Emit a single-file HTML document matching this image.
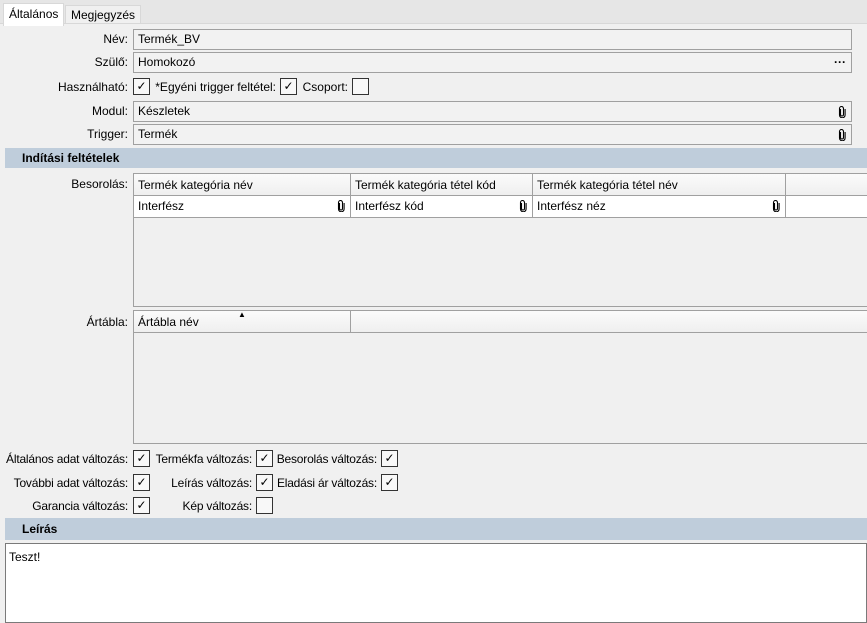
<!DOCTYPE html>
<html><head><meta charset="utf-8"><style>
*{box-sizing:border-box;margin:0;padding:0}
body{width:867px;height:618px;overflow:hidden;background:#f0f0f0;font-family:"Liberation Sans",sans-serif;font-size:12px;color:#000;position:relative}
.a{position:absolute;white-space:nowrap}
.top{left:0;top:0;width:867px;height:24px;background:#e6e6e6;border-bottom:1px solid #d8d8d8}
.tab{top:3px;height:22px;line-height:20px;padding:0 5px}
.lbl{text-align:right;width:128px;left:0}
.r{text-align:right}
.inp{left:133px;width:719px;height:21px;background:#f2f2f2;border:1px solid #a0a0a0;line-height:19px;padding-left:4px}
.cb{width:17px;height:17px;border:1px solid #333;background:#f8f8f8;text-align:center;line-height:15px;font-size:12px}
.sec{left:5px;width:862px;height:20px;background:#bfcddb;font-weight:bold;line-height:20px;padding-left:17px}
.grid{left:133px;width:740px;background:#f0f0f0;border:1px solid #a0a0a0}
.hc{position:absolute;top:0;height:22px;line-height:22px;padding-left:4px;border-right:1px solid #a0a0a0;background:linear-gradient(#fbfbfb,#efefef);border-bottom:1px solid #a0a0a0}
.dc{position:absolute;top:22px;height:22px;line-height:21px;padding-left:4px;border-right:1px solid #a0a0a0;background:#fff;border-bottom:1px solid #a0a0a0}
.clip{position:absolute;right:5px;top:4px;width:8px;height:12px}
</style></head><body>
<svg width="0" height="0" style="position:absolute"><defs><symbol id="pc" viewBox="0 0 8 12"><path d="M2.5 3v5.5a1.5 1.5 0 0 0 3 0V2.5a2 2 0 0 0-4 0v6.5a2.8 2.8 0 0 0 5.6 0V3" fill="none" stroke="#000" stroke-width="1.1"/></symbol></defs></svg>
<div class="a top"></div>
<div class="a" style="left:5px;top:24px;width:862px;height:594px;background:#f0f0f0"></div>
<div class="a tab" style="left:3px;background:#fff;border:1px solid #d8d8d8;border-bottom:none;height:23px">Általános</div>
<div class="a tab" style="left:65px;background:#f0f0f0;border:1px solid #d8d8d8;top:5px;height:19px;line-height:18px">Megjegyzés</div>

<div class="a lbl" style="top:32px">Név:</div><div class="a inp" style="top:29px">Termék_BV</div>
<div class="a lbl" style="top:55px">Szülő:</div><div class="a inp" style="top:52px">Homokozó<span style="position:absolute;right:5px;font-weight:bold">···</span></div>
<div class="a lbl" style="top:80px">Használható:</div><div class="a cb" style="left:133px;top:78px">✓</div>
<div class="a r" style="left:150px;width:126px;top:80px">*Egyéni trigger feltétel:</div><div class="a cb" style="left:280px;top:78px">✓</div>
<div class="a r" style="left:298px;width:50px;top:80px">Csoport:</div><div class="a cb" style="left:352px;top:78px"></div>
<div class="a lbl" style="top:104px">Modul:</div><div class="a inp" style="top:101px">Készletek<svg class="clip"><use href="#pc"/></svg></div>
<div class="a lbl" style="top:127px">Trigger:</div><div class="a inp" style="top:124px">Termék<svg class="clip"><use href="#pc"/></svg></div>
<div class="a sec" style="top:148px">Indítási feltételek</div>

<div class="a lbl" style="top:177px">Besorolás:</div>
<div class="a grid" style="top:173px;height:134px">
<div class="hc" style="left:0;width:217px">Termék kategória név</div>
<div class="hc" style="left:217px;width:182px">Termék kategória tétel kód</div>
<div class="hc" style="left:399px;width:253px">Termék kategória tétel név</div>
<div class="hc" style="left:652px;width:90px"></div>
<div class="dc" style="left:0;width:217px">Interfész<svg class="clip"><use href="#pc"/></svg></div>
<div class="dc" style="left:217px;width:182px">Interfész kód<svg class="clip"><use href="#pc"/></svg></div>
<div class="dc" style="left:399px;width:253px">Interfész néz<svg class="clip"><use href="#pc"/></svg></div>
<div class="dc" style="left:652px;width:90px"></div>
</div>
<div class="a lbl" style="top:315px">Ártábla:</div>
<div class="a grid" style="top:310px;height:134px">
<div class="hc" style="left:0;width:217px">Ártábla név<span style="position:absolute;left:104px;top:-7px;font-size:8px">▲</span></div>
<div class="hc" style="left:217px;width:525px"></div>
</div>

<div class="a lbl" style="top:452px;letter-spacing:-0.2px">Általános adat változás:</div><div class="a cb" style="left:133px;top:450px">✓</div>
<div class="a r" style="left:150px;width:102px;top:452px;letter-spacing:-0.2px">Termékfa változás:</div><div class="a cb" style="left:256px;top:450px">✓</div>
<div class="a r" style="left:273px;width:104px;top:452px;letter-spacing:-0.2px">Besorolás változás:</div><div class="a cb" style="left:381px;top:450px">✓</div>
<div class="a lbl" style="top:476px;letter-spacing:-0.2px">További adat változás:</div><div class="a cb" style="left:133px;top:474px">✓</div>
<div class="a r" style="left:150px;width:102px;top:476px;letter-spacing:-0.2px">Leírás változás:</div><div class="a cb" style="left:256px;top:474px">✓</div>
<div class="a r" style="left:273px;width:104px;top:476px;letter-spacing:-0.2px">Eladási ár változás:</div><div class="a cb" style="left:381px;top:474px">✓</div>
<div class="a lbl" style="top:499px;letter-spacing:-0.2px">Garancia változás:</div><div class="a cb" style="left:133px;top:497px">✓</div>
<div class="a r" style="left:150px;width:102px;top:499px;letter-spacing:-0.2px">Kép változás:</div><div class="a cb" style="left:256px;top:497px"></div>
<div class="a sec" style="top:518px;height:22px;line-height:22px">Leírás</div>
<div class="a" style="left:5px;top:543px;width:862px;height:80px;background:#fff;border:1px solid #7a7a7a;padding:6px 3px">Teszt!</div>
</body></html>
